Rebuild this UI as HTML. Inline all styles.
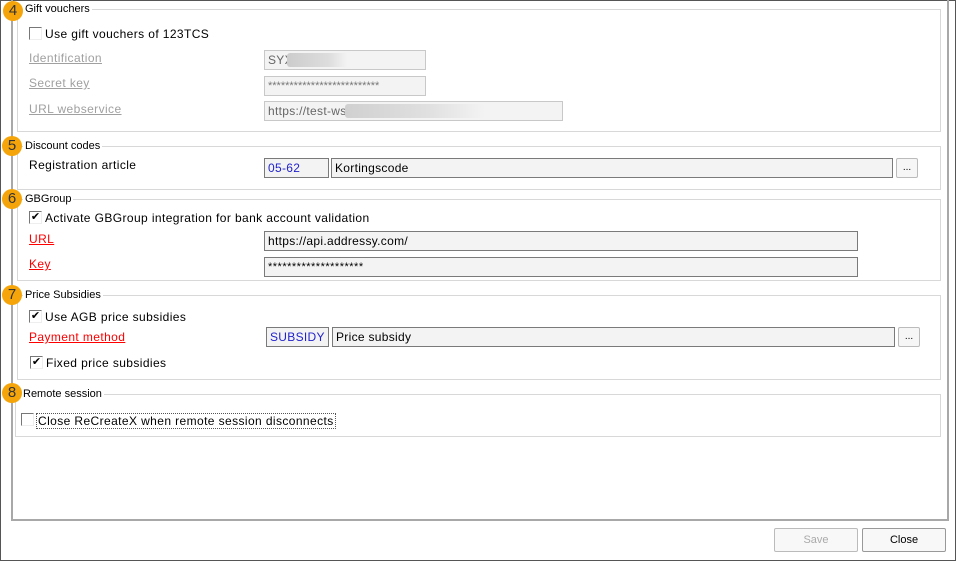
<!DOCTYPE html>
<html><head><meta charset="utf-8"><style>
*{margin:0;padding:0;box-sizing:border-box}
body{width:956px;height:561px;background:#fff;font-family:"Liberation Sans","DejaVu Sans",sans-serif;font-size:12px;color:#000;position:relative;overflow:hidden}
.a{position:absolute}
.outer{left:0;top:0;width:956px;height:561px;border:1px solid #555}
.panel{left:11px;top:-2px;width:938px;height:523px;border:2px solid #a8a8a8;border-top:none}
.grp{position:absolute;border:1px solid #d8d8d8}
.leg{position:absolute;background:#fff;font-size:11px;padding:0 2px;line-height:13px}
.badge{position:absolute;width:20px;height:20px;border-radius:50%;background:#f5a50a;color:#333;font-size:15px;line-height:20px;text-align:center}
.inp{position:absolute;background:#f3f3f3;border:1px solid #7a7a7a;height:20px;font-size:12px;line-height:18px;padding-left:3px;white-space:nowrap;overflow:hidden;letter-spacing:0.3px}
.dis{border-color:#c8c8c8;color:#666}
.cb{position:absolute;width:13px;height:13px;border-left:1px solid #777;border-top:1px solid #777;border-right:1px solid #eee;border-bottom:1px solid #eee;font-size:11px;line-height:11px;text-align:center;font-weight:bold}
.lbl{position:absolute;font-size:12px;line-height:14px;white-space:nowrap;letter-spacing:0.4px}
.link{text-decoration:underline;color:#f00}
.glink{text-decoration:underline;color:#a0a0a0}
.btn{position:absolute;width:22px;height:20px;border:1px solid #bbb;background:#f6f6f6;border-radius:2px;font-size:10px;text-align:center;line-height:18px}
.blur{position:absolute;height:14px;background:linear-gradient(90deg,#ccc,#ddd 70%,#f3f3f3);border-radius:3px}
.b2{position:absolute;height:24px;border:1px solid #bbb;background:#f8f8f8;text-align:center;line-height:22px;font-size:11px;border-radius:2px}
</style></head><body>
<div class="a outer"></div>
<div class="a panel"></div>

<!-- 4 -->
<div class="grp" style="left:17px;top:9px;width:924px;height:123px"></div>
<div class="leg" style="left:23px;top:3px">Gift vouchers</div>
<div class="badge" style="left:3px;top:1px">4</div>
<div class="cb" style="left:29px;top:27px"></div>
<div class="lbl" style="left:45px;top:27px">Use gift vouchers of 123TCS</div>
<div class="lbl glink" style="left:29px;top:51px">Identification</div>
<div class="lbl glink" style="left:29px;top:76px">Secret key</div>
<div class="lbl glink" style="left:29px;top:102px">URL webservice</div>
<div class="inp dis" style="left:264px;top:50px;width:162px">SYX</div>
<div class="blur" style="left:287px;top:53px;width:60px"></div>
<div class="inp dis" style="left:264px;top:76px;width:162px;font-size:11px;color:#777;letter-spacing:0">**************************</div>
<div class="inp dis" style="left:264px;top:101px;width:299px">https://test-ws.</div>
<div class="blur" style="left:345px;top:104px;width:140px;background:linear-gradient(90deg,#d0d0d0,#e0e0e0 60%,#f3f3f3)"></div>

<!-- 5 -->
<div class="grp" style="left:17px;top:146px;width:924px;height:44px"></div>
<div class="leg" style="left:23px;top:140px">Discount codes</div>
<div class="badge" style="left:2px;top:136px">5</div>
<div class="lbl" style="left:29px;top:158px">Registration article</div>
<div class="inp" style="left:264px;top:158px;width:65px;color:#22c">05-62</div>
<div class="inp" style="left:331px;top:158px;width:562px">Kortingscode</div>
<div class="btn" style="left:896px;top:158px">...</div>

<!-- 6 -->
<div class="grp" style="left:17px;top:199px;width:924px;height:82px"></div>
<div class="leg" style="left:23px;top:193px">GBGroup</div>
<div class="badge" style="left:2px;top:189px">6</div>
<div class="cb" style="left:29px;top:211px">✔</div>
<div class="lbl" style="left:45px;top:211px">Activate GBGroup integration for bank account validation</div>
<div class="lbl link" style="left:29px;top:232px">URL</div>
<div class="lbl link" style="left:29px;top:257px">Key</div>
<div class="inp" style="left:264px;top:231px;width:594px">https://api.addressy.com/</div>
<div class="inp" style="left:264px;top:257px;width:594px;font-size:11px;letter-spacing:0.5px">********************</div>

<!-- 7 -->
<div class="grp" style="left:17px;top:295px;width:924px;height:85px"></div>
<div class="leg" style="left:23px;top:289px">Price Subsidies</div>
<div class="badge" style="left:2px;top:285px">7</div>
<div class="cb" style="left:29px;top:310px">✔</div>
<div class="lbl" style="left:45px;top:310px">Use AGB price subsidies</div>
<div class="lbl link" style="left:29px;top:330px">Payment method</div>
<div class="inp" style="left:266px;top:327px;width:63px;color:#22c">SUBSIDY</div>
<div class="inp" style="left:332px;top:327px;width:563px">Price subsidy</div>
<div class="btn" style="left:898px;top:327px">...</div>
<div class="cb" style="left:30px;top:356px">✔</div>
<div class="lbl" style="left:46px;top:356px">Fixed price subsidies</div>

<!-- 8 -->
<div class="grp" style="left:15px;top:394px;width:926px;height:43px"></div>
<div class="leg" style="left:21px;top:388px">Remote session</div>
<div class="badge" style="left:2px;top:383px">8</div>
<div class="cb" style="left:21px;top:413px"></div>
<div class="lbl" style="left:36px;top:413px;border:1px dotted #555;padding:0 1px">Close ReCreateX when remote session disconnects</div>

<div class="b2" style="left:774px;top:528px;width:84px;color:#aaa">Save</div>
<div class="b2" style="left:862px;top:528px;width:84px;border-color:#999">Close</div>
</body></html>
